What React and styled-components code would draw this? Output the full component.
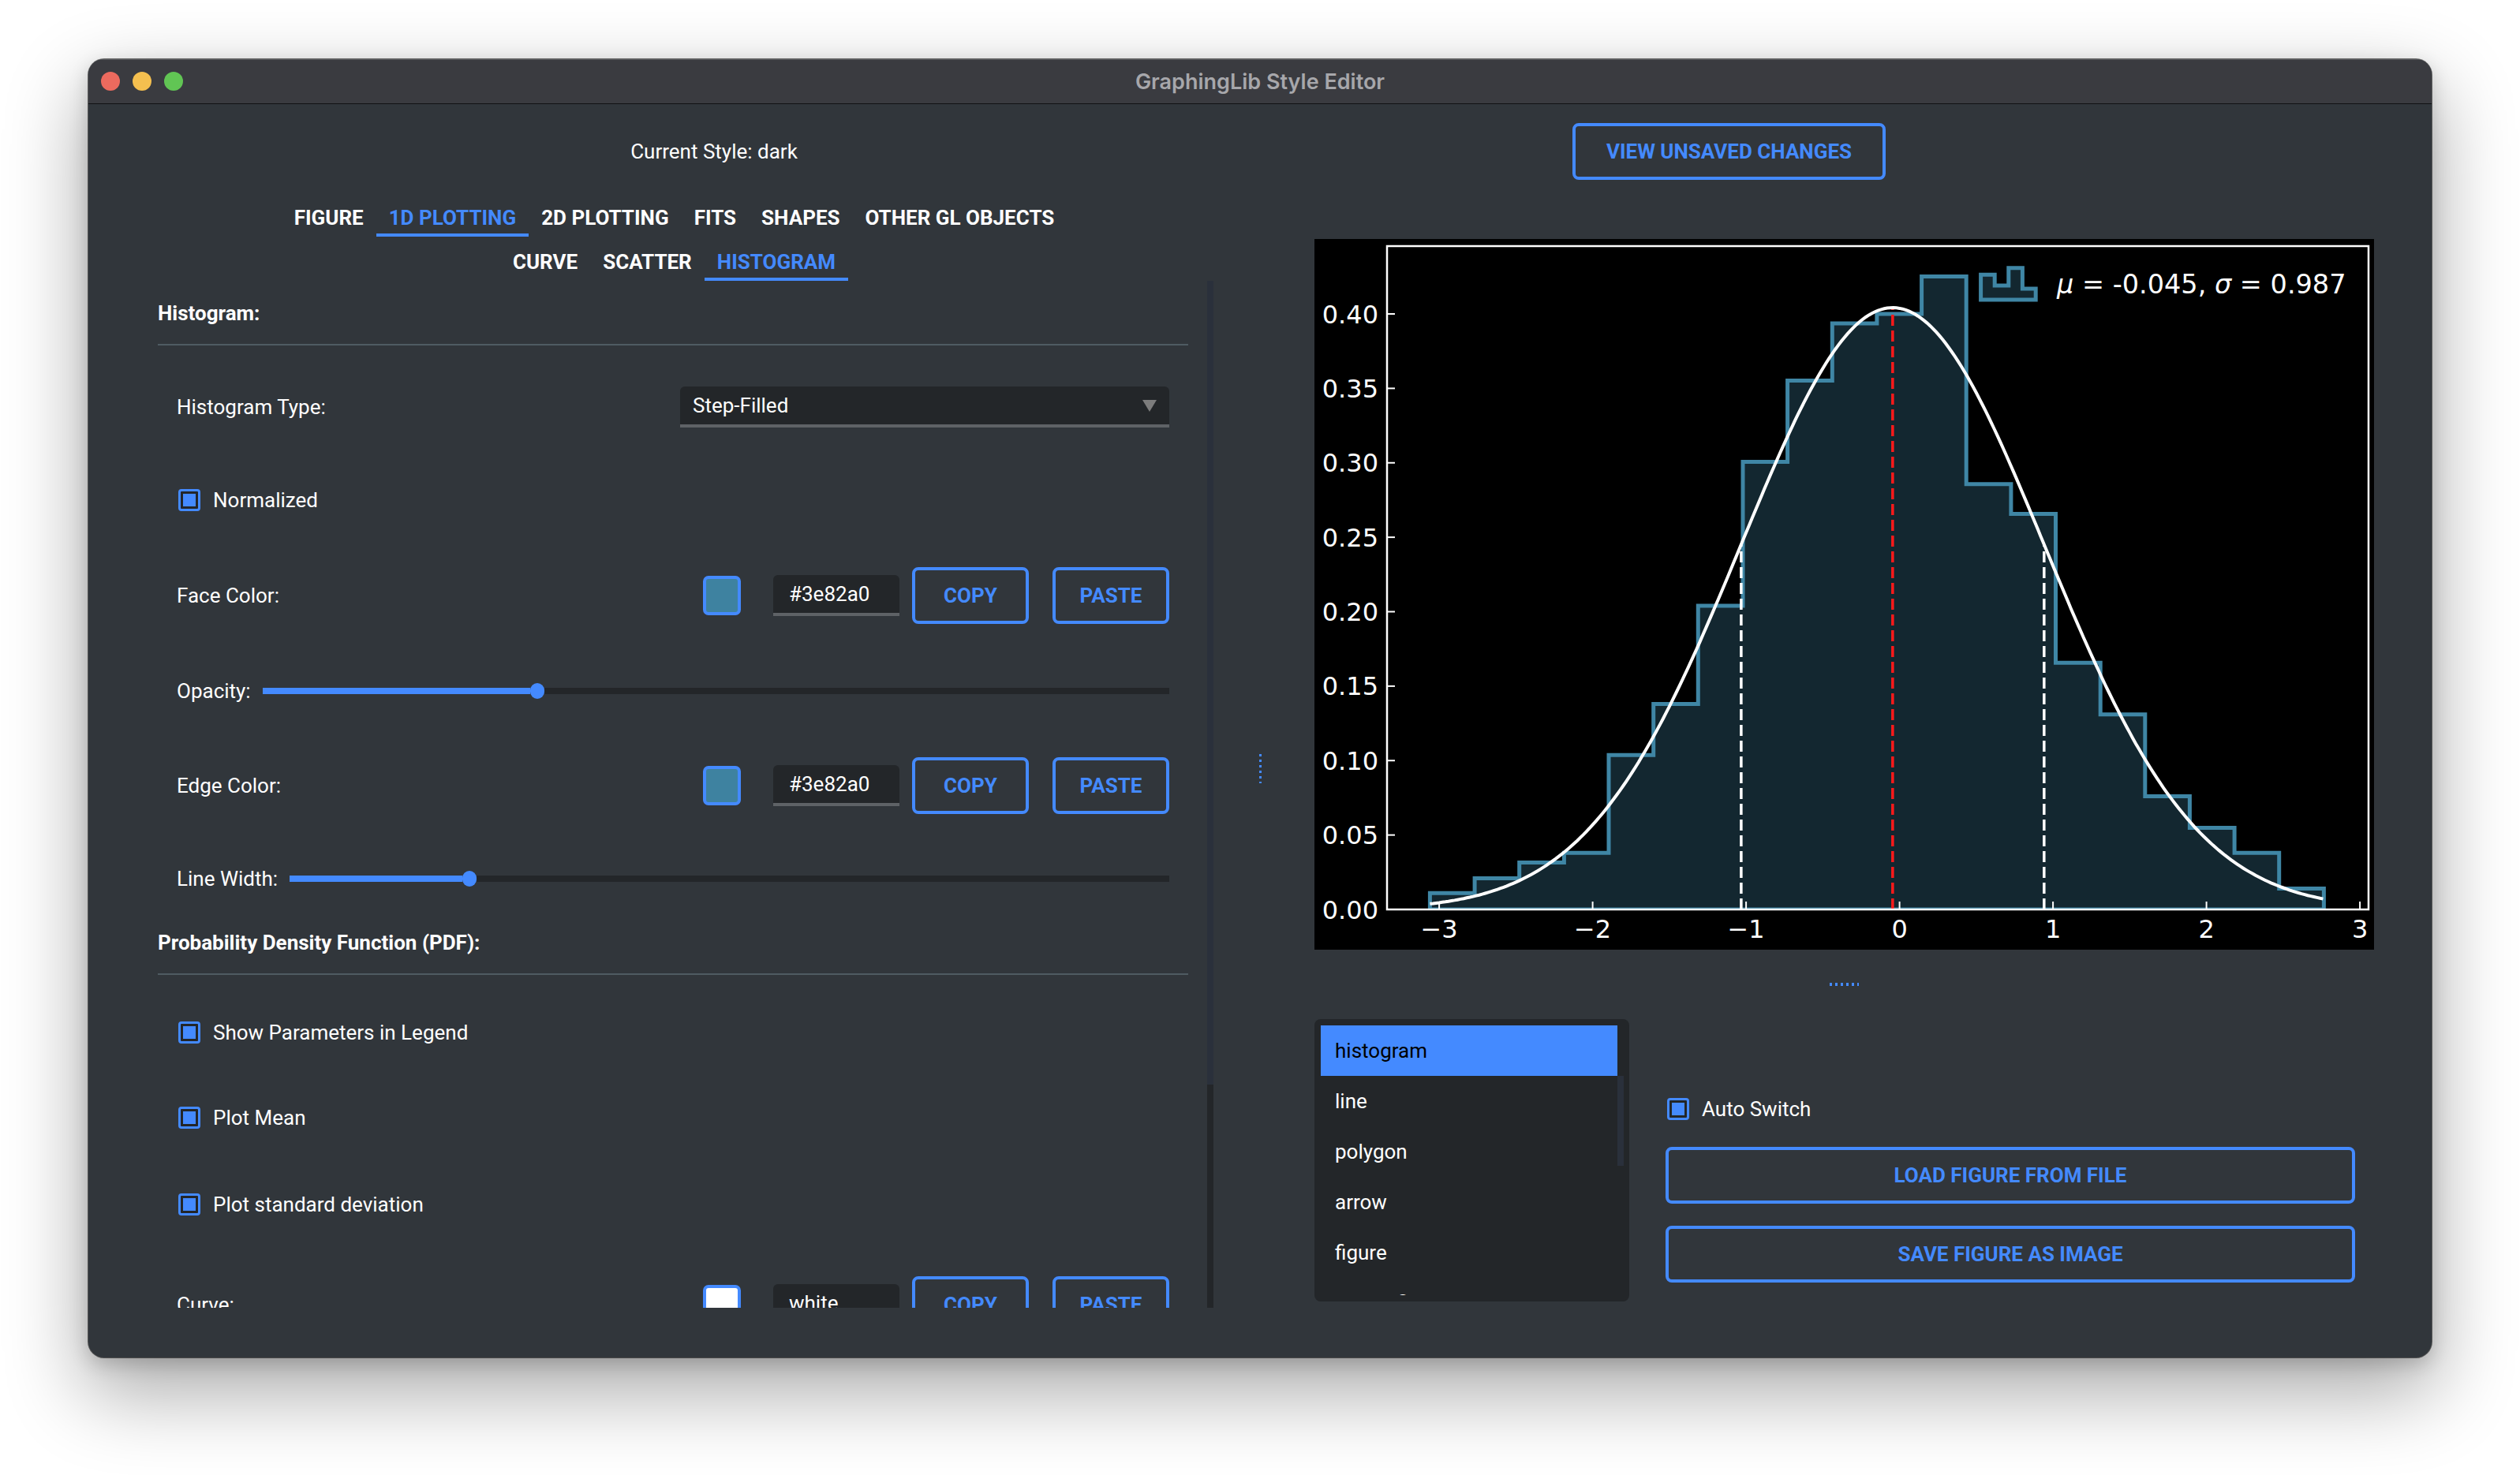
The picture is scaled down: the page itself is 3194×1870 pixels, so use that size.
import React from 'react';
import styled, { createGlobalStyle } from 'styled-components';

const BLUE = '#448aff';
const FIELD = '#232629';

const GlobalStyle = createGlobalStyle`
  html, body { margin: 0; padding: 0; background: #ffffff; }
  body { font-family: Roboto, 'Liberation Sans', sans-serif; }
  * { box-sizing: border-box; }
`;

const Page = styled.div`
  width: 3194px;
  height: 1870px;
  padding: 75px 0 0 112px;
  overflow: hidden;
`;

const Window = styled.div`
  width: 2970px;
  height: 1646px;
  border-radius: 20px;
  overflow: hidden;
  background: #31363b;
  display: flex;
  flex-direction: column;
  box-shadow: 0 0 0 1px rgba(0, 0, 0, 0.55), 0 40px 100px 6px rgba(0, 0, 0, 0.33),
    0 8px 24px rgba(0, 0, 0, 0.18);
`;

const TitleBar = styled.div`
  flex: none;
  height: 57px;
  display: grid;
  grid-template-columns: 1fr auto 1fr;
  align-items: center;
  padding: 0 16px;
  background: #3a3b40;
  border-bottom: 1px solid #111214;
  box-shadow: inset 0 1px 0 rgba(255, 255, 255, 0.16);
`;

const Lights = styled.div`
  display: flex;
  gap: 16px;
`;

const Light = styled.span`
  width: 24px;
  height: 24px;
  border-radius: 50%;
  background: ${(p) => p.$c};
`;

const WindowTitle = styled.div`
  font: 600 27px Inter, Roboto, sans-serif;
  color: #a7a7ab;
`;

const Body = styled.div`
  flex: 1;
  min-height: 0;
  display: flex;
  flex-direction: column;
  padding: 24px 73px 0 58px;
`;

const TopRow = styled.div`
  flex: none;
  height: 72px;
  display: flex;
  align-items: center;
`;

const StyleName = styled.div`
  width: 1470px;
  text-align: center;
  font-size: 26px;
  color: #fff;
`;

const OutlineButton = styled.button`
  flex: none;
  width: ${(p) => (p.$w ? `${p.$w}px` : '100%')};
  height: 72px;
  margin-left: ${(p) => p.$ml || 0}px;
  margin-top: ${(p) => p.$mt || 0}px;
  padding: 0;
  background: transparent;
  border: 4px solid ${BLUE};
  border-radius: 8px;
  color: ${BLUE};
  font: 700 26px Roboto, sans-serif;
  text-transform: uppercase;
`;

const Split = styled.div`
  flex: 1;
  min-height: 0;
  display: flex;
`;

const LeftColumn = styled.div`
  width: 1369px;
  flex: none;
  display: flex;
  flex-direction: column;
  align-items: center;
  padding-top: 25px;
`;

const TabBar = styled.div`
  display: flex;
  justify-content: center;
  margin-top: ${(p) => (p.$sub ? 9 : 0)}px;
`;

const Tab = styled.div`
  padding: 8px 16px 5px;
  line-height: 30px;
  font-weight: 700;
  font-size: 26px;
  color: ${(p) => (p.$active ? BLUE : '#fff')};
  border-bottom: 4px solid ${(p) => (p.$active ? BLUE : 'transparent')};
`;

const ScrollArea = styled.div`
  align-self: stretch;
  height: 1302px;
  display: flex;
  overflow: hidden;
`;

const ScrollContent = styled.div`
  flex: 1;
  padding: 26px 24px 0 30px;
`;

const ScrollBar = styled.div`
  width: 8px;
  flex: none;
  margin-right: 1px;
  background: ${FIELD};
  display: flex;
  flex-direction: column;
`;

const ScrollHandle = styled.div`
  height: ${(p) => p.$h}px;
  background: #2a303b;
`;

const Section = styled.div`
  & + & {
    margin-top: 8px;
  }
`;

const SectionTitle = styled.div`
  font-weight: 700;
  font-size: 26px;
  line-height: 30px;
  color: #fff;
  padding-bottom: 24px;
  border-bottom: 2px solid #4f5b62;
`;

const Rows = styled.div`
  padding-top: 20px;
`;

const Row = styled.div`
  height: ${(p) => p.$h}px;
  display: flex;
  align-items: center;
  padding: 0 24px;
`;

const Label = styled.span`
  font-size: 26px;
  color: #fff;
  white-space: nowrap;
`;

const CheckBox = styled.span`
  flex: none;
  width: 28px;
  height: 28px;
  margin-left: 2px;
  margin-right: 16px;
  border: 3px solid ${BLUE};
  border-radius: 4px;
  padding: 3px;
  background: ${FIELD};
  &::after {
    content: '';
    display: block;
    width: 100%;
    height: 100%;
    background: ${BLUE};
  }
`;

const Field = styled.div`
  flex: none;
  width: ${(p) => p.$w}px;
  height: 52px;
  margin-left: ${(p) => (p.$ml === 'auto' ? 'auto' : `${p.$ml || 0}px`)};
  display: flex;
  align-items: center;
  justify-content: space-between;
  padding: 0 16px 0 ${(p) => p.$pl || 16}px;
  background: ${FIELD};
  border-bottom: 4px solid #5e6266;
  border-radius: 6px 6px 0 0;
  font-size: 26px;
  color: #fff;
`;

const DropArrow = styled.span`
  width: 0;
  height: 0;
  border-left: 9px solid transparent;
  border-right: 9px solid transparent;
  border-top: 15px solid #7c7c7c;
`;

const Swatch = styled.span`
  flex: none;
  width: 48px;
  height: 50px;
  margin-left: auto;
  border: 4px solid ${BLUE};
  border-radius: 7px;
  background: ${(p) => p.$c};
`;

const Slider = styled.div`
  flex: 1;
  margin-left: 15px;
  display: flex;
  align-items: center;
  height: 20px;
`;

const SliderFill = styled.div`
  flex: 0 0 calc((100% - 18px) * ${(p) => p.$v});
  height: 8px;
  background: ${BLUE};
`;

const SliderKnob = styled.div`
  flex: none;
  width: 18px;
  height: 20px;
  border-radius: 9px;
  background: ${BLUE};
`;

const SliderRest = styled.div`
  flex: 1;
  height: 8px;
  background: ${FIELD};
`;

const VSplitter = styled.div`
  width: 127px;
  flex: none;
  display: flex;
  align-items: center;
  padding-left: 57px;
`;

const GripV = styled.div`
  width: 3px;
  height: 37px;
  background: repeating-linear-gradient(to bottom, ${BLUE} 0 3px, transparent 3px 7px);
`;

const RightColumn = styled.div`
  width: 1343px;
  flex: none;
  display: flex;
  flex-direction: column;
  padding-top: 75px;
`;

const ChartBox = styled.div`
  height: 901px;
  background: #000;
  flex: none;
  svg {
    display: block;
  }
`;

const HSplitter = styled.div`
  height: 88px;
  flex: none;
  display: flex;
  align-items: center;
  justify-content: center;
`;

const GripH = styled.div`
  width: 37px;
  height: 4px;
  background: repeating-linear-gradient(to right, ${BLUE} 0 3px, transparent 3px 7px);
`;

const BottomPanel = styled.div`
  height: 358px;
  flex: none;
  display: flex;
`;

const ListBox = styled.div`
  width: 399px;
  flex: none;
  display: flex;
  padding: 8px 7px 8px 8px;
  background: ${FIELD};
  border-radius: 8px;
`;

const ListItems = styled.div`
  flex: 1;
  overflow: hidden;
`;

const ListItem = styled.div`
  height: 64px;
  display: flex;
  align-items: center;
  padding-left: 18px;
  font-size: 26px;
  color: ${(p) => (p.$sel ? '#000' : '#fff')};
  background: ${(p) => (p.$sel ? BLUE : 'transparent')};
`;

const ListScroll = styled.div`
  width: 8px;
  flex: none;
  padding-top: 64px;
`;

const ListHandle = styled.div`
  height: 114px;
  background: #2a303b;
`;

const Controls = styled.div`
  width: 874px;
  flex: none;
  margin-left: 46px;
  padding-top: 100px;
  display: flex;
  flex-direction: column;
`;

const CheckRow = styled.div`
  height: 28px;
  display: flex;
  align-items: center;
`;

// ---------- chart ----------
const MU = -0.045;
const SIG = 0.987;
const X = (v) => 741.6 + 194.5 * v;
const Y = (p) => 850 - 1887.5 * p;
const E0 = -3.06;
const BW = 0.29125;
const HEIGHTS = [
  0.011, 0.021, 0.0316, 0.038, 0.1037, 0.138, 0.204, 0.3006, 0.3553, 0.3937, 0.4, 0.4252,
  0.2857, 0.2657, 0.1657, 0.131, 0.0761, 0.0548, 0.038, 0.0141,
];
const pdf = (v) => Math.exp(-((v - MU) ** 2) / (2 * SIG * SIG)) / (SIG * Math.sqrt(2 * Math.PI));

const histPath = () => {
  let d = `M${X(E0).toFixed(1)} ${Y(0)}`;
  HEIGHTS.forEach((h, i) => {
    d += ` V${Y(h).toFixed(1)} H${X(E0 + (i + 1) * BW).toFixed(1)}`;
  });
  return `${d} V${Y(0)} Z`;
};

const curvePoints = () => {
  const pts = [];
  for (let v = E0; v <= 2.766; v += 0.02) pts.push(`${X(v).toFixed(1)},${Y(pdf(v)).toFixed(1)}`);
  return pts.join(' ');
};

const Y_TICKS = [0, 0.05, 0.1, 0.15, 0.2, 0.25, 0.3, 0.35, 0.4];
const X_TICKS = [-3, -2, -1, 0, 1, 2, 3];
const TICK_FONT = { fontFamily: "'DejaVu Sans', sans-serif", fontSize: 32, fill: '#fff' };

const Chart = () => (
  <ChartBox>
    <svg width="1343" height="901" viewBox="0 0 1343 901">
      <defs>
        <clipPath id="axes">
          <rect x="92" y="9" width="1244" height="841" />
        </clipPath>
      </defs>
      <g clipPath="url(#axes)">
        <path d={histPath()} fill="#3e82a0" fillOpacity="0.3" stroke="#3f86a5" strokeWidth="5" />
        <line x1={X(MU - SIG)} y1={Y(0)} x2={X(MU - SIG)} y2={Y(pdf(MU - SIG))} stroke="#fff" strokeWidth="3.5" strokeDasharray="14 6" />
        <line x1={X(MU + SIG)} y1={Y(0)} x2={X(MU + SIG)} y2={Y(pdf(MU + SIG))} stroke="#fff" strokeWidth="3.5" strokeDasharray="14 6" />
        <line x1={X(MU)} y1={Y(0)} x2={X(MU)} y2={Y(pdf(MU))} stroke="#ff1a1a" strokeWidth="3.5" strokeDasharray="14 6" />
        <polyline points={curvePoints()} fill="none" stroke="#fff" strokeWidth="4" />
      </g>
      <rect x="92" y="9" width="1244" height="841" fill="none" stroke="#fff" strokeWidth="2.5" />
      {Y_TICKS.map((t) => (
        <g key={t}>
          <line x1="92" x2="102" y1={Y(t)} y2={Y(t)} stroke="#fff" strokeWidth="2" />
          <text x="81" y={Y(t) + 11.5} textAnchor="end" {...TICK_FONT}>
            {t.toFixed(2)}
          </text>
        </g>
      ))}
      {X_TICKS.map((t) => (
        <g key={t}>
          <line x1={X(t)} x2={X(t)} y1="850" y2="840" stroke="#fff" strokeWidth="2" />
          <text x={X(t)} y="886" textAnchor="middle" {...TICK_FONT}>
            {t < 0 ? `\u2212${-t}` : t}
          </text>
        </g>
      ))}
      <path
        d="M844.6 76.9 V45.2 H862.2 V59 H879.8 V36.8 H897.4 V63.1 H914.2 V76.9 Z"
        fill="#3e82a0"
        fillOpacity="0.3"
        stroke="#3f86a5"
        strokeWidth="5"
      />
      <text x="941" y="69" {...TICK_FONT} fontSize="33.5">
        <tspan fontStyle="italic">μ</tspan> = -0.045, <tspan fontStyle="italic">σ</tspan> = 0.987
      </text>
    </svg>
  </ChartBox>
);

// ---------- form ----------
const ColorRow = ({ label, color, value, h }) => (
  <Row $h={h}>
    <Label>{label}</Label>
    <Swatch $c={color} />
    <Field $w={160} $ml={41} $pl={20}>
      {value}
    </Field>
    <OutlineButton $w={148} $ml={16}>
      Copy
    </OutlineButton>
    <OutlineButton $w={148} $ml={30}>
      Paste
    </OutlineButton>
  </Row>
);

const CheckItem = ({ label, h }) => (
  <Row $h={h}>
    <CheckBox />
    <Label>{label}</Label>
  </Row>
);

const SliderRow = ({ label, value, h }) => (
  <Row $h={h}>
    <Label>{label}</Label>
    <Slider>
      <SliderFill $v={value} />
      <SliderKnob />
      <SliderRest />
    </Slider>
  </Row>
);

const TABS = ['Figure', '1D Plotting', '2D Plotting', 'Fits', 'Shapes', 'Other GL Objects'];
const SUBTABS = ['Curve', 'Scatter', 'Histogram'];
const ITEMS = ['histogram', 'line', 'polygon', 'arrow', 'figure', 'vector field'];

const App = () => (
  <Page>
    <GlobalStyle />
    <Window>
      <TitleBar>
        <Lights>
          <Light $c="#ec6a5e" />
          <Light $c="#f4bf4f" />
          <Light $c="#61c554" />
        </Lights>
        <WindowTitle>GraphingLib Style Editor</WindowTitle>
        <span />
      </TitleBar>
      <Body>
        <TopRow>
          <StyleName>Current Style: dark</StyleName>
          <OutlineButton $w={397} $ml={353}>
            View unsaved changes
          </OutlineButton>
        </TopRow>
        <Split>
          <LeftColumn>
            <TabBar>
              {TABS.map((t) => (
                <Tab key={t} $active={t === '1D Plotting'}>
                  {t.toUpperCase()}
                </Tab>
              ))}
            </TabBar>
            <TabBar $sub>
              {SUBTABS.map((t) => (
                <Tab key={t} $active={t === 'Histogram'}>
                  {t.toUpperCase()}
                </Tab>
              ))}
            </TabBar>
            <ScrollArea>
              <ScrollContent>
                <Section>
                  <SectionTitle>Histogram:</SectionTitle>
                  <Rows>
                    <Row $h={116}>
                      <Label>Histogram Type:</Label>
                      <Field $w={620} $ml="auto">
                        Step-Filled
                        <DropArrow />
                      </Field>
                    </Row>
                    <CheckItem label="Normalized" h={120} />
                    <ColorRow label="Face Color:" color="#3e82a0" value="#3e82a0" h={122} />
                    <SliderRow label="Opacity:" value={0.3} h={120} />
                    <ColorRow label="Edge Color:" color="#3e82a0" value="#3e82a0" h={120} />
                    <SliderRow label="Line Width:" value={0.2} h={116} />
                  </Rows>
                </Section>
                <Section>
                  <SectionTitle>Probability Density Function (PDF):</SectionTitle>
                  <Rows>
                    <CheckItem label="Show Parameters in Legend" h={106} />
                    <CheckItem label="Plot Mean" h={110} />
                    <CheckItem label="Plot standard deviation" h={110} />
                    <ColorRow label="Curve:" color="#ffffff" value="white" h={144} />
                  </Rows>
                </Section>
              </ScrollContent>
              <ScrollBar>
                <ScrollHandle $h={1019} />
              </ScrollBar>
            </ScrollArea>
          </LeftColumn>
          <VSplitter>
            <GripV />
          </VSplitter>
          <RightColumn>
            <Chart />
            <HSplitter>
              <GripH />
            </HSplitter>
            <BottomPanel>
              <ListBox>
                <ListItems>
                  {ITEMS.map((it, i) => (
                    <ListItem key={it} $sel={i === 0}>
                      {it}
                    </ListItem>
                  ))}
                </ListItems>
                <ListScroll>
                  <ListHandle />
                </ListScroll>
              </ListBox>
              <Controls>
                <CheckRow>
                  <CheckBox />
                  <Label>Auto Switch</Label>
                </CheckRow>
                <OutlineButton $mt={34}>Load figure from file</OutlineButton>
                <OutlineButton $mt={28}>Save figure as image</OutlineButton>
              </Controls>
            </BottomPanel>
          </RightColumn>
        </Split>
      </Body>
    </Window>
  </Page>
);

export default App;
